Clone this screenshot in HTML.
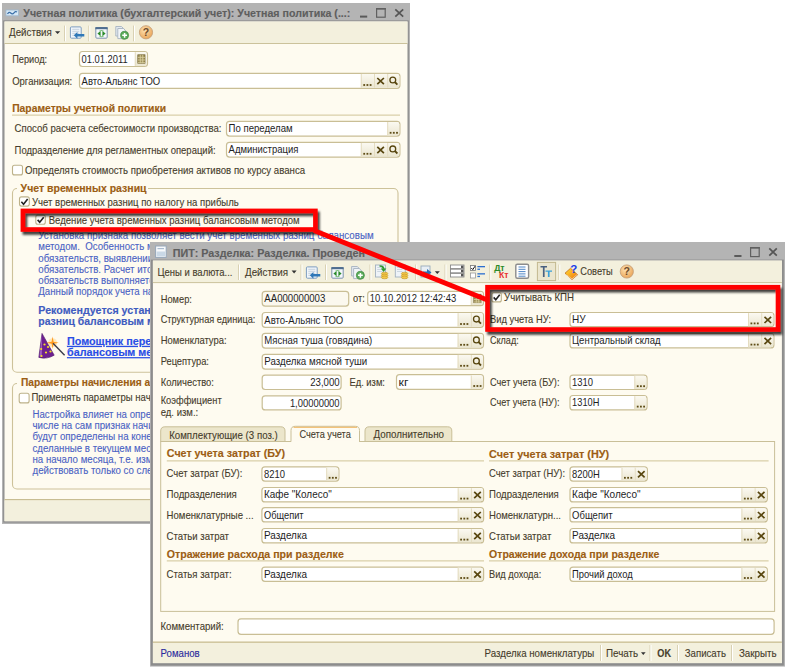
<!DOCTYPE html>
<html><head><meta charset="utf-8"><title>1C</title>
<style>html,body{margin:0;padding:0;background:#fff;width:788px;height:669px;overflow:hidden;font-family:"Liberation Sans",sans-serif}svg{display:block}</style>
</head><body>
<svg width="788" height="669" viewBox="0 0 788 669" font-family="&quot;Liberation Sans&quot;, sans-serif"><defs>
<linearGradient id="gBtn" x1="0" y1="0" x2="0" y2="1"><stop offset="0" stop-color="#fbf9f1"/><stop offset="1" stop-color="#ebe6d0"/></linearGradient>
<linearGradient id="gBook" x1="0" y1="0" x2="1" y2="1"><stop offset="0" stop-color="#ffe030"/><stop offset="1" stop-color="#f07010"/></linearGradient>
<radialGradient id="gOr" cx="0.4" cy="0.35" r="0.7"><stop offset="0" stop-color="#fde0b0"/><stop offset="1" stop-color="#e9a355"/></radialGradient>
<filter id="sh" x="-10%" y="-30%" width="120%" height="160%"><feGaussianBlur in="SourceAlpha" stdDeviation="1.2"/><feOffset dx="2" dy="2.5" result="o"/><feFlood flood-color="#000" flood-opacity="0.75"/><feComposite in2="o" operator="in"/><feMerge><feMergeNode/><feMergeNode in="SourceGraphic"/></feMerge></filter>
</defs><rect x="0" y="0" width="788" height="669" fill="#ffffff"/>
<rect x="2" y="3" width="408.00" height="521.00" fill="#b4b4b4"/>
<rect x="3.2" y="20.4" width="405.60" height="502.20" fill="#8c8c8c"/>
<rect x="4.5" y="21.5" width="403.00" height="499.70" fill="#fefbf0"/>
<rect x="6" y="10" width="12.40" height="5.80" fill="#d6e8f6" stroke="#9fb8cf" stroke-width="0.8"/>
<path d="M7.5,14 Q9,11.2 10.7,13 T14,12.8 T17,12" fill="none" stroke="#3a6fa8" stroke-width="1.2"/>
<text x="23.3" y="16.9" font-size="11" font-weight="bold" fill="#5e5e5e" textLength="327.0" lengthAdjust="spacingAndGlyphs" stroke="#5e5e5e" stroke-width="0.15">Учетная политика (бухгалтерский учет): Учетная политика (...:</text>
<rect x="360" y="15.6" width="7.20" height="2.00" fill="#5a5a5a"/>
<rect x="376.6" y="8.6" width="8.60" height="8.60" fill="none" stroke="#606060" stroke-width="1.2"/>
<rect x="376" y="8" width="9.80" height="1.60" fill="#606060"/>
<path d="M395.3,9.3L403.2,16.6M403.2,9.3L395.3,16.6" stroke="#555" stroke-width="1.7"/>
<rect x="4.5" y="21.5" width="403.00" height="21.70" fill="#f3f0dd"/>
<line x1="4.5" y1="43.5" x2="407.5" y2="43.5" stroke="#cbc29b" stroke-width="1"/>
<text x="9.1" y="36.4" font-size="11" fill="#463d2c" textLength="42.7" lengthAdjust="spacingAndGlyphs" stroke="#463d2c" stroke-width="0.12">Действия</text>
<path d="M55,31.2H60.2L57.6,34Z" fill="#333"/>
<line x1="64.5" y1="25.6" x2="64.5" y2="41.3" stroke="#d9d1b3" stroke-width="1"/>
<line x1="65.5" y1="25.6" x2="65.5" y2="41.3" stroke="#ffffff" stroke-width="1"/>
<line x1="88.8" y1="25.6" x2="88.8" y2="41.3" stroke="#d9d1b3" stroke-width="1"/>
<line x1="89.8" y1="25.6" x2="89.8" y2="41.3" stroke="#ffffff" stroke-width="1"/>
<line x1="133.5" y1="25.6" x2="133.5" y2="41.3" stroke="#d9d1b3" stroke-width="1"/>
<line x1="134.5" y1="25.6" x2="134.5" y2="41.3" stroke="#ffffff" stroke-width="1"/>
<g transform="translate(0,0)">
<rect x="70.4" y="26.9" width="10.8" height="11.3" rx="1" fill="#f1f6fb" stroke="#7d9dc0" stroke-width="1"/>
<line x1="72.3" y1="29.3" x2="79.3" y2="29.3" stroke="#b9c6d6" stroke-width="0.8"/>
<line x1="72.3" y1="31.3" x2="79.3" y2="31.3" stroke="#b9c6d6" stroke-width="0.8"/>
<line x1="72.3" y1="33.3" x2="79.3" y2="33.3" stroke="#b9c6d6" stroke-width="0.8"/>
<line x1="72.3" y1="35.3" x2="79.3" y2="35.3" stroke="#b9c6d6" stroke-width="0.8"/>
<path d="M73.8,35.3L77.4,31.9V34.1H84.3V36.5H77.4V38.7Z" fill="#2f78b8"/>
</g>
<g transform="translate(0,0)">
<rect x="95.8" y="27.6" width="11.4" height="10.6" rx="1" fill="#f3f7fb" stroke="#7d93ad" stroke-width="1"/>
<rect x="95.3" y="27.1" width="12.4" height="2.1" fill="#4e6d8f"/>
<path d="M97.4,33.6L100.6,30.9V36.3Z M105.6,33.6L102.4,30.9V36.3Z" fill="#2a8a2a"/>
<path d="M99.5,31.2Q101.5,29.8 103.5,31.2 M99.5,36Q101.5,37.4 103.5,36" fill="none" stroke="#7cc07c" stroke-width="1.1"/>
</g>
<g transform="translate(0,0)">
<path d="M115.8,26.5H121.5L123.8,28.8V36H115.8Z" fill="#e3e9f0" stroke="#a7b3c1" stroke-width="0.9"/>
<path d="M117.8,28.5H123.5L126,31V38.6H117.8Z" fill="#f2f5f8" stroke="#a7b3c1" stroke-width="0.9"/>
<circle cx="124.6" cy="35.3" r="4" fill="#5aaa5a" stroke="#3d8a3d" stroke-width="0.7"/>
<path d="M122.2,35.3H127M124.6,32.9V37.7" stroke="#ffffff" stroke-width="1.5"/>
</g>
<circle cx="146.0" cy="32.3" r="6.6" fill="url(#gOr)" stroke="#c6a27c" stroke-width="0.9"/>
<text x="146.0" y="36.0" font-size="10.5" font-weight="bold" fill="#6d4a2a" text-anchor="middle">?</text>
<text x="12.2" y="62.7" font-size="11" fill="#463d2c" textLength="34.9" lengthAdjust="spacingAndGlyphs" stroke="#463d2c" stroke-width="0.12">Период:</text>
<rect x="79.5" y="51.5" width="68.00" height="15.00" fill="#ffffff" stroke="#c9be95" stroke-width="1.2" rx="3"/>
<path d="M134.8,52.1H144.5Q146.9,52.1 146.9,54.5V63.5Q146.9,65.9 144.5,65.9H134.8Z" fill="url(#gBtn)"/>
<line x1="135.3" y1="52.2" x2="135.3" y2="65.8" stroke="#e4dcc0" stroke-width="1"/>
<rect x="137.8" y="54.8" width="7.20" height="8.40" fill="#a1925a" stroke="#6f6030" stroke-width="0.7"/>
<line x1="137.8" y1="57.4" x2="145.0" y2="57.4" stroke="#d9cf9f" stroke-width="0.8"/>
<line x1="137.8" y1="60.0" x2="145.0" y2="60.0" stroke="#d9cf9f" stroke-width="0.8"/>
<line x1="137.8" y1="62.6" x2="145.0" y2="62.6" stroke="#d9cf9f" stroke-width="0.8"/>
<line x1="140.3" y1="54.8" x2="140.3" y2="63.2" stroke="#d9cf9f" stroke-width="0.8"/>
<line x1="142.70000000000002" y1="54.8" x2="142.70000000000002" y2="63.2" stroke="#d9cf9f" stroke-width="0.8"/>
<text x="81.6" y="62.7" font-size="11" fill="#1e1e1e" textLength="46.0" lengthAdjust="spacingAndGlyphs">01.01.2011</text>
<text x="12.2" y="84.6" font-size="11" fill="#463d2c" textLength="60.0" lengthAdjust="spacingAndGlyphs" stroke="#463d2c" stroke-width="0.12">Организация:</text>
<rect x="79.5" y="73.3" width="320.40" height="15.00" fill="#ffffff" stroke="#c9be95" stroke-width="1.2" rx="3"/>
<rect x="360.79999999999995" y="73.89999999999999" width="13.20" height="13.80" fill="url(#gBtn)"/>
<line x1="361.29999999999995" y1="74.0" x2="361.29999999999995" y2="87.6" stroke="#e4dcc0" stroke-width="1"/>
<rect x="363.3" y="84.10000000000001" width="1.80" height="1.80" fill="#5e4c16"/>
<rect x="366.5" y="84.10000000000001" width="1.80" height="1.80" fill="#5e4c16"/>
<rect x="369.7" y="84.10000000000001" width="1.80" height="1.80" fill="#5e4c16"/>
<rect x="373.99999999999994" y="73.89999999999999" width="13.20" height="13.80" fill="url(#gBtn)"/>
<line x1="374.49999999999994" y1="74.0" x2="374.49999999999994" y2="87.6" stroke="#e4dcc0" stroke-width="1"/>
<path d="M377.2999999999999,78.0L383.8999999999999,84.19999999999999M383.8999999999999,78.0L377.2999999999999,84.19999999999999" stroke="#58460f" stroke-width="1.7"/>
<path d="M387.19999999999993,73.89999999999999H396.8999999999999Q399.2999999999999,73.89999999999999 399.2999999999999,76.3V85.3Q399.2999999999999,87.7 396.8999999999999,87.7H387.19999999999993Z" fill="url(#gBtn)"/>
<line x1="387.69999999999993" y1="74.0" x2="387.69999999999993" y2="87.6" stroke="#e4dcc0" stroke-width="1"/>
<circle cx="392.79999999999995" cy="80.0" r="2.9" fill="none" stroke="#58460f" stroke-width="1.3"/>
<path d="M394.79999999999995,82.0L397.4,84.6" stroke="#58460f" stroke-width="1.8"/>
<text x="81.6" y="84.5" font-size="11" fill="#1e1e1e" textLength="78.6" lengthAdjust="spacingAndGlyphs">Авто-Альянс ТОО</text>
<text x="12.2" y="112.2" font-size="11" font-weight="bold" fill="#9c5e14" textLength="153.8" lengthAdjust="spacingAndGlyphs" stroke="#9c5e14" stroke-width="0.15">Параметры учетной политики</text>
<line x1="12" y1="115.2" x2="400" y2="115.2" stroke="#d9cfa9" stroke-width="1.2"/>
<text x="14.6" y="131.6" font-size="11" fill="#463d2c" textLength="206.8" lengthAdjust="spacingAndGlyphs" stroke="#463d2c" stroke-width="0.12">Способ расчета себестоимости производства:</text>
<rect x="226.5" y="121.3" width="173.40" height="14.80" fill="#ffffff" stroke="#c9be95" stroke-width="1.2" rx="3"/>
<path d="M387.2,121.89999999999999H396.9Q399.29999999999995,121.89999999999999 399.29999999999995,124.3V133.1Q399.29999999999995,135.5 396.9,135.5H387.2Z" fill="url(#gBtn)"/>
<line x1="387.7" y1="122.0" x2="387.7" y2="135.4" stroke="#e4dcc0" stroke-width="1"/>
<rect x="389.7" y="131.9" width="1.80" height="1.80" fill="#5e4c16"/>
<rect x="392.9" y="131.9" width="1.80" height="1.80" fill="#5e4c16"/>
<rect x="396.09999999999997" y="131.9" width="1.80" height="1.80" fill="#5e4c16"/>
<text x="228.6" y="132.4" font-size="11" fill="#1e1e1e" textLength="64.0" lengthAdjust="spacingAndGlyphs">По переделам</text>
<text x="14.6" y="154.0" font-size="11" fill="#463d2c" textLength="201.0" lengthAdjust="spacingAndGlyphs" stroke="#463d2c" stroke-width="0.12">Подразделение для регламентных операций:</text>
<rect x="226.5" y="142.3" width="173.40" height="14.80" fill="#ffffff" stroke="#c9be95" stroke-width="1.2" rx="3"/>
<rect x="360.79999999999995" y="142.9" width="13.20" height="13.60" fill="url(#gBtn)"/>
<line x1="361.29999999999995" y1="143.0" x2="361.29999999999995" y2="156.4" stroke="#e4dcc0" stroke-width="1"/>
<rect x="363.3" y="152.9" width="1.80" height="1.80" fill="#5e4c16"/>
<rect x="366.5" y="152.9" width="1.80" height="1.80" fill="#5e4c16"/>
<rect x="369.7" y="152.9" width="1.80" height="1.80" fill="#5e4c16"/>
<rect x="373.99999999999994" y="142.9" width="13.20" height="13.60" fill="url(#gBtn)"/>
<line x1="374.49999999999994" y1="143.0" x2="374.49999999999994" y2="156.4" stroke="#e4dcc0" stroke-width="1"/>
<path d="M377.2999999999999,146.9L383.8999999999999,153.1M383.8999999999999,146.9L377.2999999999999,153.1" stroke="#58460f" stroke-width="1.7"/>
<path d="M387.19999999999993,142.9H396.8999999999999Q399.2999999999999,142.9 399.2999999999999,145.3V154.1Q399.2999999999999,156.5 396.8999999999999,156.5H387.19999999999993Z" fill="url(#gBtn)"/>
<line x1="387.69999999999993" y1="143.0" x2="387.69999999999993" y2="156.4" stroke="#e4dcc0" stroke-width="1"/>
<circle cx="392.79999999999995" cy="148.89999999999998" r="2.9" fill="none" stroke="#58460f" stroke-width="1.3"/>
<path d="M394.79999999999995,150.89999999999998L397.4,153.49999999999997" stroke="#58460f" stroke-width="1.8"/>
<text x="228.6" y="153.4" font-size="11" fill="#1e1e1e" textLength="69.8" lengthAdjust="spacingAndGlyphs">Администрация</text>
<rect x="12.5" y="165.3" width="10.00" height="9.60" fill="#ffffff" stroke="#bdb28a" stroke-width="1.1" rx="2"/>
<text x="25.1" y="173.6" font-size="11" fill="#463d2c" textLength="280.0" lengthAdjust="spacingAndGlyphs" stroke="#463d2c" stroke-width="0.12">Определять стоимость приобретения активов по курсу аванса</text>
<rect x="12.5" y="188.5" width="385.50" height="183.80" fill="none" stroke="#cdc29a" stroke-width="1.1" rx="4.5"/>
<rect x="17" y="182" width="131.00" height="12.00" fill="#fefbf0"/>
<text x="20.6" y="191.6" font-size="11" font-weight="bold" fill="#9c5e14" textLength="126.0" lengthAdjust="spacingAndGlyphs" stroke="#9c5e14" stroke-width="0.15">Учет временных разниц</text>
<rect x="19.5" y="196.9" width="9.80" height="9.20" fill="#ffffff" stroke="#bdb28a" stroke-width="1.1" rx="2"/>
<path d="M21.376,201.8L23.536,204.17600000000002L27.64,199.1" fill="none" stroke="#222" stroke-width="1.6"/>
<text x="32.0" y="205.5" font-size="11" fill="#463d2c" textLength="206.8" lengthAdjust="spacingAndGlyphs" stroke="#463d2c" stroke-width="0.12">Учет временных разниц по налогу на прибыль</text>
<rect x="35.8" y="215.1" width="9.50" height="9.20" fill="#ffffff" stroke="#bdb28a" stroke-width="1.1" rx="2"/>
<path d="M37.61,219.85L39.709999999999994,222.16L43.699999999999996,217.225" fill="none" stroke="#222" stroke-width="1.6"/>
<text x="48.7" y="223.8" font-size="11" fill="#463d2c" textLength="251.0" lengthAdjust="spacingAndGlyphs" stroke="#463d2c" stroke-width="0.12">Ведение учета временных разниц балансовым методом</text>
<text x="38.3" y="239.1" font-size="11" fill="#4a62c4" textLength="335.3" lengthAdjust="spacingAndGlyphs" stroke="#4a62c4" stroke-width="0.12">Установка признака позволяет вести учет временных разниц балансовым</text>
<text transform="translate(38.3,250.3) scale(0.88,1)" font-size="11" fill="#4a62c4" stroke="#4a62c4" stroke-width="0.12">методом.  Особенность метода заключается в признании отложенных налоговых</text>
<text transform="translate(38.3,261.5) scale(0.88,1)" font-size="11" fill="#4a62c4" stroke="#4a62c4" stroke-width="0.12">обязательств, выявлении временных разниц и отложенных налоговых активов</text>
<text transform="translate(38.3,272.7) scale(0.88,1)" font-size="11" fill="#4a62c4" stroke="#4a62c4" stroke-width="0.12">обязательств. Расчет итоговых сумм отложенного налога и отложенных</text>
<text transform="translate(38.3,283.9) scale(0.88,1)" font-size="11" fill="#4a62c4" stroke="#4a62c4" stroke-width="0.12">обязательств выполняется по данным бухгалтерского и налогового учета.</text>
<text transform="translate(38.3,295.1) scale(0.88,1)" font-size="11" fill="#4a62c4" stroke="#4a62c4" stroke-width="0.12">Данный порядок учета налога на прибыль соответствует требованиям МСФО.</text>
<text transform="translate(38.3,314.0) scale(0.97,1)" font-size="11" font-weight="bold" fill="#3f5cc0" stroke="#3f5cc0" stroke-width="0.15">Рекомендуется установить признак ведения учета временных</text>
<text transform="translate(38.3,325.1) scale(0.95,1)" font-size="11" font-weight="bold" fill="#3f5cc0" stroke="#3f5cc0" stroke-width="0.15">разниц балансовым методом.</text>
<path d="M42,333.4 L54.2,355.2 Q47,359.6 38.8,357.4 Z" fill="#6e1f90" stroke="#4a1066" stroke-width="0.6"/>
<path d="M42,334.5 L39.6,356.5 L41.8,357 Z" fill="#b070d0" opacity="0.8"/>
<circle cx="41.2" cy="349" r="1.1" fill="#f4e020"/>
<circle cx="44.5" cy="344.5" r="1.1" fill="#f4e020"/>
<circle cx="46" cy="352.5" r="1.1" fill="#f4e020"/>
<circle cx="50.5" cy="351.5" r="1.1" fill="#f4e020"/>
<circle cx="41.5" cy="356" r="1.1" fill="#f4e020"/>
<circle cx="48" cy="347" r="1.1" fill="#f4e020"/>
<circle cx="52.6" cy="342.8" r="4.5" fill="#ffd890" opacity="0.55"/>
<path d="M52.6,336.5 L53.6,341.8 L58.8,342.8 L53.6,343.8 L52.6,349 L51.6,343.8 L46.4,342.8 L51.6,341.8Z" fill="#ff9a20"/>
<path d="M53,343.2 L64.6,355.2" stroke="#3a3a4a" stroke-width="1.4"/>
<text transform="translate(67.0,344.9) scale(0.98,1)" font-size="11" font-weight="bold" fill="#2a4ee6" text-decoration="underline" stroke="#2a4ee6" stroke-width="0.15">Помощник перехода на учет временных разниц</text>
<text transform="translate(67.0,356.1) scale(0.98,1)" font-size="11" font-weight="bold" fill="#2a4ee6" text-decoration="underline" stroke="#2a4ee6" stroke-width="0.15">балансовым методом</text>
<rect x="12.5" y="383.5" width="385.50" height="105.50" fill="none" stroke="#cdc29a" stroke-width="1.1" rx="4.5"/>
<rect x="17" y="377" width="383.00" height="13.00" fill="#fefbf0"/>
<text transform="translate(20.9,386.4) scale(0.93,1)" font-size="11" font-weight="bold" fill="#9c5e14" stroke="#9c5e14" stroke-width="0.15">Параметры начисления амортизации</text>
<rect x="19.2" y="393.3" width="9.90" height="9.60" fill="#ffffff" stroke="#bdb28a" stroke-width="1.1" rx="2"/>
<text transform="translate(31.5,401.4) scale(0.87,1)" font-size="11" fill="#463d2c" stroke="#463d2c" stroke-width="0.12">Применять параметры начисления амортизации</text>
<text transform="translate(32.5,418.0) scale(0.88,1)" font-size="11" fill="#4a62c4" stroke="#4a62c4" stroke-width="0.12">Настройка влияет на определение параметров начисления амортизации, в том</text>
<text transform="translate(32.5,429.2) scale(0.88,1)" font-size="11" fill="#4a62c4" stroke="#4a62c4" stroke-width="0.12">числе на сам признак начисления. Если флаг установлен, то параметры</text>
<text transform="translate(32.5,440.4) scale(0.88,1)" font-size="11" fill="#4a62c4" stroke="#4a62c4" stroke-width="0.12">будут определены на конец месяца с учетом изменений, которые были</text>
<text transform="translate(32.5,451.6) scale(0.88,1)" font-size="11" fill="#4a62c4" stroke="#4a62c4" stroke-width="0.12">сделанные в текущем месяце. Если флаг снят, параметры будут определены</text>
<text transform="translate(32.5,462.8) scale(0.88,1)" font-size="11" fill="#4a62c4" stroke="#4a62c4" stroke-width="0.12">на начало месяца, т.е. изменения, сделанные в текущем месяце, будут</text>
<text transform="translate(32.5,474.0) scale(0.88,1)" font-size="11" fill="#4a62c4" stroke="#4a62c4" stroke-width="0.12">действовать только со следующего месяца.</text>
<line x1="4.5" y1="499.8" x2="407.5" y2="499.8" stroke="#c8bd92" stroke-width="1.4"/>
<rect x="4.5" y="500.4" width="403.00" height="20.80" fill="#f3f0dd"/>
<rect x="150" y="242" width="635.00" height="424.60" fill="#b4b4b4"/>
<rect x="150.9" y="259.6" width="632.90" height="406.00" fill="#8c8c8c"/>
<rect x="152.9" y="260.6" width="629.00" height="402.50" fill="#fefbf0"/>
<rect x="155.6" y="246" width="10.60" height="11.40" fill="#f7f9fb" stroke="#95a6b8" stroke-width="1"/>
<rect x="156.6" y="251.5" width="8.60" height="4.90" fill="#c9d8e6"/>
<rect x="157.5" y="248" width="6.50" height="1.20" fill="#aabbd0"/>
<text x="172.8" y="257.0" font-size="11" font-weight="bold" fill="#5e5e5e" textLength="192.2" lengthAdjust="spacingAndGlyphs" stroke="#5e5e5e" stroke-width="0.15">ПИТ: Разделка: Разделка. Проведен</text>
<rect x="734.3" y="255" width="7.20" height="2.00" fill="#5a5a5a"/>
<rect x="750.6" y="247.6" width="8.60" height="9.00" fill="none" stroke="#606060" stroke-width="1.2"/>
<rect x="750" y="247" width="9.80" height="1.60" fill="#606060"/>
<path d="M769.3,248.4L776.8,255.7M776.8,248.4L769.3,255.7" stroke="#555" stroke-width="1.7"/>
<rect x="152.9" y="260.6" width="629.00" height="21.60" fill="#f3f0dd"/>
<line x1="152.9" y1="282.6" x2="781.9" y2="282.6" stroke="#cbc29b" stroke-width="1"/>
<text x="157.5" y="275.7" font-size="11" fill="#463d2c" textLength="75.0" lengthAdjust="spacingAndGlyphs" stroke="#463d2c" stroke-width="0.12">Цены и валюта...</text>
<line x1="238.5" y1="264.5" x2="238.5" y2="280" stroke="#d9d1b3" stroke-width="1"/>
<line x1="239.5" y1="264.5" x2="239.5" y2="280" stroke="#ffffff" stroke-width="1"/>
<text x="245.0" y="275.7" font-size="11" fill="#463d2c" textLength="43.0" lengthAdjust="spacingAndGlyphs" stroke="#463d2c" stroke-width="0.12">Действия</text>
<path d="M291.6,270.6H296.6L294.1,273.4Z" fill="#333"/>
<line x1="301.0" y1="264.5" x2="301.0" y2="280" stroke="#d9d1b3" stroke-width="1"/>
<line x1="302.0" y1="264.5" x2="302.0" y2="280" stroke="#ffffff" stroke-width="1"/>
<g transform="translate(236,240)">
<rect x="70.4" y="26.9" width="10.8" height="11.3" rx="1" fill="#f1f6fb" stroke="#7d9dc0" stroke-width="1"/>
<line x1="72.3" y1="29.3" x2="79.3" y2="29.3" stroke="#b9c6d6" stroke-width="0.8"/>
<line x1="72.3" y1="31.3" x2="79.3" y2="31.3" stroke="#b9c6d6" stroke-width="0.8"/>
<line x1="72.3" y1="33.3" x2="79.3" y2="33.3" stroke="#b9c6d6" stroke-width="0.8"/>
<line x1="72.3" y1="35.3" x2="79.3" y2="35.3" stroke="#b9c6d6" stroke-width="0.8"/>
<path d="M73.8,35.3L77.4,31.9V34.1H84.3V36.5H77.4V38.7Z" fill="#2f78b8"/>
</g>
<line x1="325.5" y1="264.5" x2="325.5" y2="280" stroke="#d9d1b3" stroke-width="1"/>
<line x1="326.5" y1="264.5" x2="326.5" y2="280" stroke="#ffffff" stroke-width="1"/>
<g transform="translate(236,240)">
<rect x="95.8" y="27.6" width="11.4" height="10.6" rx="1" fill="#f3f7fb" stroke="#7d93ad" stroke-width="1"/>
<rect x="95.3" y="27.1" width="12.4" height="2.1" fill="#4e6d8f"/>
<path d="M97.4,33.6L100.6,30.9V36.3Z M105.6,33.6L102.4,30.9V36.3Z" fill="#2a8a2a"/>
<path d="M99.5,31.2Q101.5,29.8 103.5,31.2 M99.5,36Q101.5,37.4 103.5,36" fill="none" stroke="#7cc07c" stroke-width="1.1"/>
</g>
<g transform="translate(235.8,240)">
<path d="M115.8,26.5H121.5L123.8,28.8V36H115.8Z" fill="#e3e9f0" stroke="#a7b3c1" stroke-width="0.9"/>
<path d="M117.8,28.5H123.5L126,31V38.6H117.8Z" fill="#f2f5f8" stroke="#a7b3c1" stroke-width="0.9"/>
<circle cx="124.6" cy="35.3" r="4" fill="#5aaa5a" stroke="#3d8a3d" stroke-width="0.7"/>
<path d="M122.2,35.3H127M124.6,32.9V37.7" stroke="#ffffff" stroke-width="1.5"/>
</g>
<line x1="370.0" y1="264.5" x2="370.0" y2="280" stroke="#d9d1b3" stroke-width="1"/>
<line x1="371.0" y1="264.5" x2="371.0" y2="280" stroke="#ffffff" stroke-width="1"/>
<rect x="375.5" y="265" width="10.00" height="12.00" fill="#eef3f8" stroke="#a3b1c0" stroke-width="0.9"/>
<line x1="377.2" y1="267.5" x2="382.5" y2="267.5" stroke="#bcc8d6" stroke-width="0.7"/>
<line x1="377.2" y1="269.5" x2="382.5" y2="269.5" stroke="#bcc8d6" stroke-width="0.7"/>
<line x1="377.2" y1="271.5" x2="382.5" y2="271.5" stroke="#bcc8d6" stroke-width="0.7"/>
<path d="M379.5,265.2Q384,265 384.6,268.6H386.4L383.6,272L380.8,268.6H382.6Q382.2,266.6 379.5,266.8Z" fill="#2f9a2f"/>
<ellipse cx="384.6" cy="273.6" rx="3.3" ry="1.4" fill="#f4c84a" stroke="#b88a18" stroke-width="0.5"/>
<ellipse cx="384.6" cy="275.5" rx="3.3" ry="1.4" fill="#f4c84a" stroke="#b88a18" stroke-width="0.5"/>
<ellipse cx="384.6" cy="277.40000000000003" rx="3.3" ry="1.4" fill="#f4c84a" stroke="#b88a18" stroke-width="0.5"/>
<rect x="395.3" y="265" width="10.00" height="12.00" fill="#eef3f8" stroke="#a3b1c0" stroke-width="0.9"/>
<line x1="397" y1="267.5" x2="402.3" y2="267.5" stroke="#bcc8d6" stroke-width="0.7"/>
<line x1="397" y1="269.5" x2="402.3" y2="269.5" stroke="#bcc8d6" stroke-width="0.7"/>
<line x1="397" y1="271.5" x2="402.3" y2="271.5" stroke="#bcc8d6" stroke-width="0.7"/>
<ellipse cx="404.6" cy="273.6" rx="3.3" ry="1.4" fill="#f4c84a" stroke="#b88a18" stroke-width="0.5"/>
<ellipse cx="404.6" cy="275.5" rx="3.3" ry="1.4" fill="#f4c84a" stroke="#b88a18" stroke-width="0.5"/>
<ellipse cx="404.6" cy="277.40000000000003" rx="3.3" ry="1.4" fill="#f4c84a" stroke="#b88a18" stroke-width="0.5"/>
<line x1="415.7" y1="264.5" x2="415.7" y2="280" stroke="#d9d1b3" stroke-width="1"/>
<line x1="416.7" y1="264.5" x2="416.7" y2="280" stroke="#ffffff" stroke-width="1"/>
<rect x="421" y="266" width="9.00" height="11.00" fill="#e8eef5" stroke="#9aaabb" stroke-width="0.9"/>
<path d="M423,271.5H427V269L431.5,272.5L427,276V273.5H423Z" fill="#2a6fb5"/>
<path d="M434.8,271.2H439.8L437.3,274Z" fill="#333"/>
<line x1="445.0" y1="264.5" x2="445.0" y2="280" stroke="#d9d1b3" stroke-width="1"/>
<line x1="446.0" y1="264.5" x2="446.0" y2="280" stroke="#ffffff" stroke-width="1"/>
<rect x="450.5" y="265.0" width="13.50" height="3.60" fill="#ffffff" stroke="#8a8a8a" stroke-width="0.9"/>
<rect x="461" y="265.6" width="2.50" height="2.40" fill="#555"/>
<rect x="450.5" y="269.2" width="13.50" height="3.60" fill="#ffffff" stroke="#8a8a8a" stroke-width="0.9"/>
<rect x="461" y="269.8" width="2.50" height="2.40" fill="#555"/>
<rect x="450.5" y="273.4" width="13.50" height="3.60" fill="#ffffff" stroke="#8a8a8a" stroke-width="0.9"/>
<rect x="461" y="274.0" width="2.50" height="2.40" fill="#555"/>
<rect x="470.5" y="265.5" width="5.00" height="5.00" fill="#fff" stroke="#777" stroke-width="0.8"/>
<path d="M471.3,268L472.8,269.6L475,266.2" fill="none" stroke="#111" stroke-width="1"/>
<rect x="470.5" y="273" width="5.00" height="5.00" fill="#fff" stroke="#999" stroke-width="0.8"/>
<rect x="477.4" y="266" width="7.60" height="1.30" fill="#2b6fd0"/>
<rect x="477.4" y="268.6" width="2.60" height="1.30" fill="#2b6fd0"/>
<rect x="477.4" y="273.2" width="7.60" height="1.30" fill="#2b6fd0"/>
<rect x="477.4" y="275.8" width="2.60" height="1.30" fill="#2b6fd0"/>
<line x1="489.8" y1="264.5" x2="489.8" y2="280" stroke="#d9d1b3" stroke-width="1"/>
<line x1="490.8" y1="264.5" x2="490.8" y2="280" stroke="#ffffff" stroke-width="1"/>
<text x="494.2" y="271.3" font-size="8.5" font-weight="bold" fill="#2a8a2a" textLength="10.4" lengthAdjust="spacingAndGlyphs">Дт</text>
<text x="499" y="278.4" font-size="8.5" font-weight="bold" fill="#e83030" textLength="9.5" lengthAdjust="spacingAndGlyphs">Кт</text>
<rect x="515.8" y="264.3" width="12.80" height="13.90" fill="#ffffff" stroke="#8c8c8c" stroke-width="1.4" rx="1.5"/>
<line x1="518.5" y1="267.0" x2="525.5" y2="267.0" stroke="#3a78c0" stroke-width="0.9"/>
<line x1="518.5" y1="269.3" x2="525.5" y2="269.3" stroke="#3a78c0" stroke-width="0.9"/>
<line x1="518.5" y1="271.6" x2="525.5" y2="271.6" stroke="#3a78c0" stroke-width="0.9"/>
<line x1="518.5" y1="273.9" x2="525.5" y2="273.9" stroke="#3a78c0" stroke-width="0.9"/>
<line x1="518.5" y1="276.2" x2="525.5" y2="276.2" stroke="#3a78c0" stroke-width="0.9"/>
<rect x="537.4" y="262.4" width="18.20" height="18.20" fill="#ebe6cf" stroke="#c3b990" stroke-width="1"/>
<path d="M540.5,266H547V267.6H544.6V277H542.9V267.6H540.5Z" fill="#4a6080"/>
<path d="M545.5,270.5H552V271.8H549.6V277H547.9V271.8H545.5Z" fill="#3aa0d8"/>
<line x1="558.8" y1="264.5" x2="558.8" y2="280" stroke="#d9d1b3" stroke-width="1"/>
<line x1="559.8" y1="264.5" x2="559.8" y2="280" stroke="#ffffff" stroke-width="1"/>
<path d="M565,273.2L570.6,268.2L577.6,274.8L572,279.6Z" fill="url(#gBook)" stroke="#b85c10" stroke-width="0.7"/>
<path d="M566.4,274.6L572,279L577,274.6" fill="none" stroke="#f8d8a0" stroke-width="0.8"/>
<text x="570.2" y="272.6" font-size="11.5" font-weight="bold" fill="#1a3ce8">?</text>
<text x="580.2" y="275.2" font-size="11" fill="#463d2c" textLength="32.5" lengthAdjust="spacingAndGlyphs" stroke="#463d2c" stroke-width="0.12">Советы</text>
<circle cx="626.8" cy="271.5" r="6.6" fill="url(#gOr)" stroke="#c6a27c" stroke-width="0.9"/>
<text x="626.8" y="275.2" font-size="10.5" font-weight="bold" fill="#6d4a2a" text-anchor="middle">?</text>
<text x="160.7" y="302.7" font-size="11" fill="#463d2c" textLength="31.2" lengthAdjust="spacingAndGlyphs" stroke="#463d2c" stroke-width="0.12">Номер:</text>
<rect x="262.2" y="291.4" width="86.50" height="14.70" fill="#fbf8ee" stroke="#c9be95" stroke-width="1.2" rx="3"/>
<text x="264.3" y="302.4" font-size="11" fill="#1e1e1e" textLength="61.0" lengthAdjust="spacingAndGlyphs">АА000000003</text>
<text x="353.0" y="301.9" font-size="11" fill="#463d2c" textLength="11.7" lengthAdjust="spacingAndGlyphs" stroke="#463d2c" stroke-width="0.12">от:</text>
<rect x="367.7" y="291.3" width="115.80" height="14.40" fill="#ffffff" stroke="#c9be95" stroke-width="1.2" rx="3"/>
<path d="M470.8,291.90000000000003H480.5Q482.9,291.90000000000003 482.9,294.3V302.7Q482.9,305.09999999999997 480.5,305.09999999999997H470.8Z" fill="url(#gBtn)"/>
<line x1="471.3" y1="292.0" x2="471.3" y2="305.0" stroke="#e4dcc0" stroke-width="1"/>
<rect x="473.79999999999995" y="294.3" width="7.20" height="8.40" fill="#a1925a" stroke="#6f6030" stroke-width="0.7"/>
<line x1="473.79999999999995" y1="296.9" x2="481.0" y2="296.9" stroke="#d9cf9f" stroke-width="0.8"/>
<line x1="473.79999999999995" y1="299.5" x2="481.0" y2="299.5" stroke="#d9cf9f" stroke-width="0.8"/>
<line x1="473.79999999999995" y1="302.09999999999997" x2="481.0" y2="302.09999999999997" stroke="#d9cf9f" stroke-width="0.8"/>
<line x1="476.29999999999995" y1="294.3" x2="476.29999999999995" y2="302.7" stroke="#d9cf9f" stroke-width="0.8"/>
<line x1="478.7" y1="294.3" x2="478.7" y2="302.7" stroke="#d9cf9f" stroke-width="0.8"/>
<text x="369.8" y="302.2" font-size="11" fill="#1e1e1e" textLength="86.4" lengthAdjust="spacingAndGlyphs">10.10.2012 12:42:43</text>
<text x="160.7" y="323.4" font-size="11" fill="#463d2c" textLength="94.6" lengthAdjust="spacingAndGlyphs" stroke="#463d2c" stroke-width="0.12">Структурная единица:</text>
<rect x="262.2" y="312.5" width="221.30" height="14.80" fill="#ffffff" stroke="#c9be95" stroke-width="1.2" rx="3"/>
<rect x="457.6" y="313.1" width="13.20" height="13.60" fill="url(#gBtn)"/>
<line x1="458.1" y1="313.2" x2="458.1" y2="326.6" stroke="#e4dcc0" stroke-width="1"/>
<rect x="460.1000000000001" y="323.09999999999997" width="1.80" height="1.80" fill="#5e4c16"/>
<rect x="463.30000000000007" y="323.09999999999997" width="1.80" height="1.80" fill="#5e4c16"/>
<rect x="466.50000000000006" y="323.09999999999997" width="1.80" height="1.80" fill="#5e4c16"/>
<path d="M470.8,313.1H480.5Q482.9,313.1 482.9,315.5V324.3Q482.9,326.7 480.5,326.7H470.8Z" fill="url(#gBtn)"/>
<line x1="471.3" y1="313.2" x2="471.3" y2="326.6" stroke="#e4dcc0" stroke-width="1"/>
<circle cx="476.4" cy="319.09999999999997" r="2.9" fill="none" stroke="#58460f" stroke-width="1.3"/>
<path d="M478.4,321.09999999999997L481.0,323.7" stroke="#58460f" stroke-width="1.8"/>
<text x="264.3" y="323.6" font-size="11" fill="#1e1e1e" textLength="79.0" lengthAdjust="spacingAndGlyphs">Авто-Альянс ТОО</text>
<text x="160.7" y="344.3" font-size="11" fill="#463d2c" textLength="65.9" lengthAdjust="spacingAndGlyphs" stroke="#463d2c" stroke-width="0.12">Номенклатура:</text>
<rect x="262.2" y="333.3" width="221.30" height="14.80" fill="#ffffff" stroke="#c9be95" stroke-width="1.2" rx="3"/>
<rect x="457.6" y="333.90000000000003" width="13.20" height="13.60" fill="url(#gBtn)"/>
<line x1="458.1" y1="334.0" x2="458.1" y2="347.40000000000003" stroke="#e4dcc0" stroke-width="1"/>
<rect x="460.1000000000001" y="343.9" width="1.80" height="1.80" fill="#5e4c16"/>
<rect x="463.30000000000007" y="343.9" width="1.80" height="1.80" fill="#5e4c16"/>
<rect x="466.50000000000006" y="343.9" width="1.80" height="1.80" fill="#5e4c16"/>
<path d="M470.8,333.90000000000003H480.5Q482.9,333.90000000000003 482.9,336.3V345.1Q482.9,347.5 480.5,347.5H470.8Z" fill="url(#gBtn)"/>
<line x1="471.3" y1="334.0" x2="471.3" y2="347.40000000000003" stroke="#e4dcc0" stroke-width="1"/>
<circle cx="476.4" cy="339.90000000000003" r="2.9" fill="none" stroke="#58460f" stroke-width="1.3"/>
<path d="M478.4,341.90000000000003L481.0,344.50000000000006" stroke="#58460f" stroke-width="1.8"/>
<text x="264.3" y="344.4" font-size="11" fill="#1e1e1e" textLength="108.0" lengthAdjust="spacingAndGlyphs">Мясная туша (говядина)</text>
<text x="160.7" y="365.4" font-size="11" fill="#463d2c" textLength="48.2" lengthAdjust="spacingAndGlyphs" stroke="#463d2c" stroke-width="0.12">Рецептура:</text>
<rect x="262.2" y="354.3" width="221.30" height="14.80" fill="#ffffff" stroke="#c9be95" stroke-width="1.2" rx="3"/>
<rect x="457.6" y="354.90000000000003" width="13.20" height="13.60" fill="url(#gBtn)"/>
<line x1="458.1" y1="355.0" x2="458.1" y2="368.40000000000003" stroke="#e4dcc0" stroke-width="1"/>
<rect x="460.1000000000001" y="364.9" width="1.80" height="1.80" fill="#5e4c16"/>
<rect x="463.30000000000007" y="364.9" width="1.80" height="1.80" fill="#5e4c16"/>
<rect x="466.50000000000006" y="364.9" width="1.80" height="1.80" fill="#5e4c16"/>
<path d="M470.8,354.90000000000003H480.5Q482.9,354.90000000000003 482.9,357.3V366.1Q482.9,368.5 480.5,368.5H470.8Z" fill="url(#gBtn)"/>
<line x1="471.3" y1="355.0" x2="471.3" y2="368.40000000000003" stroke="#e4dcc0" stroke-width="1"/>
<circle cx="476.4" cy="360.90000000000003" r="2.9" fill="none" stroke="#58460f" stroke-width="1.3"/>
<path d="M478.4,362.90000000000003L481.0,365.50000000000006" stroke="#58460f" stroke-width="1.8"/>
<text x="264.3" y="365.4" font-size="11" fill="#1e1e1e" textLength="103.0" lengthAdjust="spacingAndGlyphs">Разделка мясной туши</text>
<text x="160.7" y="386.2" font-size="11" fill="#463d2c" textLength="53.3" lengthAdjust="spacingAndGlyphs" stroke="#463d2c" stroke-width="0.12">Количество:</text>
<rect x="262.2" y="375.1" width="78.90" height="14.40" fill="#ffffff" stroke="#c9be95" stroke-width="1.2" rx="3"/>
<text x="310.2" y="386.0" font-size="11" fill="#1e1e1e" textLength="29.4" lengthAdjust="spacingAndGlyphs">23,000</text>
<text x="349.4" y="386.2" font-size="11" fill="#463d2c" textLength="35.6" lengthAdjust="spacingAndGlyphs" stroke="#463d2c" stroke-width="0.12">Ед. изм:</text>
<rect x="396.5" y="374.7" width="87.00" height="14.60" fill="#ffffff" stroke="#c9be95" stroke-width="1.2" rx="3"/>
<path d="M470.8,375.3H480.5Q482.9,375.3 482.9,377.7V386.3Q482.9,388.7 480.5,388.7H470.8Z" fill="url(#gBtn)"/>
<line x1="471.3" y1="375.4" x2="471.3" y2="388.6" stroke="#e4dcc0" stroke-width="1"/>
<rect x="473.3" y="385.09999999999997" width="1.80" height="1.80" fill="#5e4c16"/>
<rect x="476.5" y="385.09999999999997" width="1.80" height="1.80" fill="#5e4c16"/>
<rect x="479.7" y="385.09999999999997" width="1.80" height="1.80" fill="#5e4c16"/>
<text x="398.6" y="385.7" font-size="11" fill="#1e1e1e" textLength="9.8" lengthAdjust="spacingAndGlyphs">кг</text>
<text x="160.7" y="403.9" font-size="11" fill="#463d2c" textLength="61.0" lengthAdjust="spacingAndGlyphs" stroke="#463d2c" stroke-width="0.12">Коэффициент</text>
<text x="160.7" y="415.7" font-size="11" fill="#463d2c" textLength="37.5" lengthAdjust="spacingAndGlyphs" stroke="#463d2c" stroke-width="0.12">ед. изм.:</text>
<rect x="262.2" y="395.9" width="78.90" height="14.00" fill="#ffffff" stroke="#c9be95" stroke-width="1.2" rx="3"/>
<text x="289.9" y="406.6" font-size="11" fill="#1e1e1e" textLength="49.7" lengthAdjust="spacingAndGlyphs">1,00000000</text>
<rect x="491.9" y="292.7" width="9.40" height="9.20" fill="#ffffff" stroke="#bdb28a" stroke-width="1.1" rx="2"/>
<path d="M493.688,297.4L495.768,299.688L499.72,294.8" fill="none" stroke="#222" stroke-width="1.6"/>
<text x="504.0" y="300.6" font-size="11" fill="#463d2c" textLength="70.0" lengthAdjust="spacingAndGlyphs" stroke="#463d2c" stroke-width="0.12">Учитывать КПН</text>
<text x="490.0" y="323.4" font-size="11" fill="#463d2c" textLength="61.0" lengthAdjust="spacingAndGlyphs" stroke="#463d2c" stroke-width="0.12">Вид учета НУ:</text>
<rect x="570.0" y="312.5" width="203.90" height="14.20" fill="#ffffff" stroke="#c9be95" stroke-width="1.2" rx="3"/>
<rect x="748.0" y="313.1" width="13.20" height="13.00" fill="url(#gBtn)"/>
<line x1="748.5" y1="313.2" x2="748.5" y2="326.0" stroke="#e4dcc0" stroke-width="1"/>
<rect x="750.5" y="322.49999999999994" width="1.80" height="1.80" fill="#5e4c16"/>
<rect x="753.7" y="322.49999999999994" width="1.80" height="1.80" fill="#5e4c16"/>
<rect x="756.9000000000001" y="322.49999999999994" width="1.80" height="1.80" fill="#5e4c16"/>
<path d="M761.2,313.1H770.9000000000001Q773.3000000000001,313.1 773.3000000000001,315.5V323.7Q773.3000000000001,326.09999999999997 770.9000000000001,326.09999999999997H761.2Z" fill="url(#gBtn)"/>
<line x1="761.7" y1="313.2" x2="761.7" y2="326.0" stroke="#e4dcc0" stroke-width="1"/>
<path d="M764.5000000000001,316.8L771.1,323.00000000000006M771.1,316.8L764.5000000000001,323.00000000000006" stroke="#58460f" stroke-width="1.7"/>
<text x="572.1" y="323.3" font-size="11" fill="#1e1e1e" textLength="13.6" lengthAdjust="spacingAndGlyphs">НУ</text>
<text x="490.0" y="344.4" font-size="11" fill="#463d2c" textLength="28.7" lengthAdjust="spacingAndGlyphs" stroke="#463d2c" stroke-width="0.12">Склад:</text>
<rect x="570.0" y="333.5" width="203.90" height="14.40" fill="#ffffff" stroke="#c9be95" stroke-width="1.2" rx="3"/>
<rect x="748.0" y="334.1" width="13.20" height="13.20" fill="url(#gBtn)"/>
<line x1="748.5" y1="334.2" x2="748.5" y2="347.2" stroke="#e4dcc0" stroke-width="1"/>
<rect x="750.5" y="343.69999999999993" width="1.80" height="1.80" fill="#5e4c16"/>
<rect x="753.7" y="343.69999999999993" width="1.80" height="1.80" fill="#5e4c16"/>
<rect x="756.9000000000001" y="343.69999999999993" width="1.80" height="1.80" fill="#5e4c16"/>
<path d="M761.2,334.1H770.9000000000001Q773.3000000000001,334.1 773.3000000000001,336.5V344.9Q773.3000000000001,347.29999999999995 770.9000000000001,347.29999999999995H761.2Z" fill="url(#gBtn)"/>
<line x1="761.7" y1="334.2" x2="761.7" y2="347.2" stroke="#e4dcc0" stroke-width="1"/>
<path d="M764.5000000000001,337.9L771.1,344.1M771.1,337.9L764.5000000000001,344.1" stroke="#58460f" stroke-width="1.7"/>
<text x="572.1" y="344.4" font-size="11" fill="#1e1e1e" textLength="88.4" lengthAdjust="spacingAndGlyphs">Центральный склад</text>
<text x="490.0" y="386.2" font-size="11" fill="#463d2c" textLength="69.5" lengthAdjust="spacingAndGlyphs" stroke="#463d2c" stroke-width="0.12">Счет учета (БУ):</text>
<rect x="570.0" y="375.1" width="77.00" height="14.40" fill="#ffffff" stroke="#c9be95" stroke-width="1.2" rx="3"/>
<path d="M634.3,375.70000000000005H644.0Q646.4,375.70000000000005 646.4,378.1V386.5Q646.4,388.9 644.0,388.9H634.3Z" fill="url(#gBtn)"/>
<line x1="634.8" y1="375.8" x2="634.8" y2="388.8" stroke="#e4dcc0" stroke-width="1"/>
<rect x="636.8" y="385.29999999999995" width="1.80" height="1.80" fill="#5e4c16"/>
<rect x="640.0" y="385.29999999999995" width="1.80" height="1.80" fill="#5e4c16"/>
<rect x="643.2" y="385.29999999999995" width="1.80" height="1.80" fill="#5e4c16"/>
<text x="572.1" y="386.0" font-size="11" fill="#1e1e1e" textLength="21.0" lengthAdjust="spacingAndGlyphs">1310</text>
<text x="490.0" y="406.4" font-size="11" fill="#463d2c" textLength="69.5" lengthAdjust="spacingAndGlyphs" stroke="#463d2c" stroke-width="0.12">Счет учета (НУ):</text>
<rect x="570.0" y="395.5" width="77.00" height="14.40" fill="#ffffff" stroke="#c9be95" stroke-width="1.2" rx="3"/>
<path d="M634.3,396.1H644.0Q646.4,396.1 646.4,398.5V406.9Q646.4,409.29999999999995 644.0,409.29999999999995H634.3Z" fill="url(#gBtn)"/>
<line x1="634.8" y1="396.2" x2="634.8" y2="409.2" stroke="#e4dcc0" stroke-width="1"/>
<rect x="636.8" y="405.69999999999993" width="1.80" height="1.80" fill="#5e4c16"/>
<rect x="640.0" y="405.69999999999993" width="1.80" height="1.80" fill="#5e4c16"/>
<rect x="643.2" y="405.69999999999993" width="1.80" height="1.80" fill="#5e4c16"/>
<text x="572.1" y="406.4" font-size="11" fill="#1e1e1e" textLength="27.3" lengthAdjust="spacingAndGlyphs">1310Н</text>
<path d="M160.7,442V431Q160.7,426.8 164.9,426.8H280.8Q285,426.8 285,431V442" fill="#ece6cb" stroke="#c9bf98" stroke-width="1"/>
<path d="M365,442V431Q365,426.8 369.2,426.8H447.6Q451.8,426.8 451.8,431V442" fill="#ece6cb" stroke="#c9bf98" stroke-width="1"/>
<rect x="160.7" y="441.5" width="613.90" height="169.90" fill="#fefbf0" stroke="#c9bf98" stroke-width="1"/>
<path d="M291,442V430.5Q291,426.3 295.2,426.3H355.3Q359.5,426.3 359.5,430.5V442" fill="#fefbf0" stroke="#c9bf98" stroke-width="1"/>
<path d="M293.5,427.3H357" stroke="#f3c27a" stroke-width="1.3"/>
<rect x="291.6" y="440.8" width="67.30" height="1.50" fill="#fefbf0"/>
<text x="169.2" y="438.6" font-size="11" fill="#463d2c" textLength="108.6" lengthAdjust="spacingAndGlyphs" stroke="#463d2c" stroke-width="0.12">Комплектующие (3 поз.)</text>
<text x="299.4" y="437.8" font-size="11" fill="#463d2c" textLength="51.4" lengthAdjust="spacingAndGlyphs" stroke="#463d2c" stroke-width="0.12">Счета учета</text>
<text x="373.6" y="438.2" font-size="11" fill="#463d2c" textLength="70.4" lengthAdjust="spacingAndGlyphs" stroke="#463d2c" stroke-width="0.12">Дополнительно</text>
<text x="166.8" y="457.2" font-size="11" font-weight="bold" fill="#9c5e14" textLength="118.2" lengthAdjust="spacingAndGlyphs" stroke="#9c5e14" stroke-width="0.15">Счет учета затрат (БУ)</text>
<line x1="166.8" y1="460.8" x2="484" y2="460.8" stroke="#d9cfa9" stroke-width="1.2"/>
<text x="166.6" y="477.4" font-size="11" fill="#463d2c" textLength="75.8" lengthAdjust="spacingAndGlyphs" stroke="#463d2c" stroke-width="0.12">Счет затрат (БУ):</text>
<rect x="261.9" y="466.9" width="77.00" height="14.20" fill="#ffffff" stroke="#c9be95" stroke-width="1.2" rx="3"/>
<path d="M326.2,467.5H335.9Q338.29999999999995,467.5 338.29999999999995,469.9V478.1Q338.29999999999995,480.5 335.9,480.5H326.2Z" fill="url(#gBtn)"/>
<line x1="326.7" y1="467.59999999999997" x2="326.7" y2="480.40000000000003" stroke="#e4dcc0" stroke-width="1"/>
<rect x="328.7" y="476.9" width="1.80" height="1.80" fill="#5e4c16"/>
<rect x="331.9" y="476.9" width="1.80" height="1.80" fill="#5e4c16"/>
<rect x="335.09999999999997" y="476.9" width="1.80" height="1.80" fill="#5e4c16"/>
<text x="264.0" y="477.7" font-size="11" fill="#1e1e1e" textLength="21.0" lengthAdjust="spacingAndGlyphs">8210</text>
<text x="166.6" y="498.3" font-size="11" fill="#463d2c" textLength="70.2" lengthAdjust="spacingAndGlyphs" stroke="#463d2c" stroke-width="0.12">Подразделения</text>
<rect x="261.9" y="487.5" width="221.70" height="14.40" fill="#ffffff" stroke="#c9be95" stroke-width="1.2" rx="3"/>
<rect x="457.70000000000005" y="488.1" width="13.20" height="13.20" fill="url(#gBtn)"/>
<line x1="458.20000000000005" y1="488.2" x2="458.20000000000005" y2="501.2" stroke="#e4dcc0" stroke-width="1"/>
<rect x="460.2000000000001" y="497.69999999999993" width="1.80" height="1.80" fill="#5e4c16"/>
<rect x="463.4000000000001" y="497.69999999999993" width="1.80" height="1.80" fill="#5e4c16"/>
<rect x="466.6000000000001" y="497.69999999999993" width="1.80" height="1.80" fill="#5e4c16"/>
<path d="M470.90000000000003,488.1H480.6Q483.0,488.1 483.0,490.5V498.9Q483.0,501.29999999999995 480.6,501.29999999999995H470.90000000000003Z" fill="url(#gBtn)"/>
<line x1="471.40000000000003" y1="488.2" x2="471.40000000000003" y2="501.2" stroke="#e4dcc0" stroke-width="1"/>
<path d="M474.2,491.9L480.8,498.1M480.8,491.9L474.2,498.1" stroke="#58460f" stroke-width="1.7"/>
<text x="264.0" y="498.4" font-size="11" fill="#1e1e1e" textLength="67.8" lengthAdjust="spacingAndGlyphs">Кафе &quot;Колесо&quot;</text>
<text x="166.6" y="519.1" font-size="11" fill="#463d2c" textLength="87.0" lengthAdjust="spacingAndGlyphs" stroke="#463d2c" stroke-width="0.12">Номенклатурные ...</text>
<rect x="261.9" y="507.7" width="221.70" height="14.20" fill="#ffffff" stroke="#c9be95" stroke-width="1.2" rx="3"/>
<rect x="457.70000000000005" y="508.3" width="13.20" height="13.00" fill="url(#gBtn)"/>
<line x1="458.20000000000005" y1="508.4" x2="458.20000000000005" y2="521.1999999999999" stroke="#e4dcc0" stroke-width="1"/>
<rect x="460.2000000000001" y="517.6999999999999" width="1.80" height="1.80" fill="#5e4c16"/>
<rect x="463.4000000000001" y="517.6999999999999" width="1.80" height="1.80" fill="#5e4c16"/>
<rect x="466.6000000000001" y="517.6999999999999" width="1.80" height="1.80" fill="#5e4c16"/>
<path d="M470.90000000000003,508.3H480.6Q483.0,508.3 483.0,510.7V518.9Q483.0,521.3 480.6,521.3H470.90000000000003Z" fill="url(#gBtn)"/>
<line x1="471.40000000000003" y1="508.4" x2="471.40000000000003" y2="521.1999999999999" stroke="#e4dcc0" stroke-width="1"/>
<path d="M474.2,511.9999999999999L480.8,518.1999999999999M480.8,511.9999999999999L474.2,518.1999999999999" stroke="#58460f" stroke-width="1.7"/>
<text x="264.0" y="518.5" font-size="11" fill="#1e1e1e" textLength="39.6" lengthAdjust="spacingAndGlyphs">Общепит</text>
<text x="166.6" y="539.8" font-size="11" fill="#463d2c" textLength="62.4" lengthAdjust="spacingAndGlyphs" stroke="#463d2c" stroke-width="0.12">Статьи затрат</text>
<rect x="261.9" y="528.5" width="221.70" height="14.40" fill="#ffffff" stroke="#c9be95" stroke-width="1.2" rx="3"/>
<rect x="457.70000000000005" y="529.1" width="13.20" height="13.20" fill="url(#gBtn)"/>
<line x1="458.20000000000005" y1="529.2" x2="458.20000000000005" y2="542.1999999999999" stroke="#e4dcc0" stroke-width="1"/>
<rect x="460.2000000000001" y="538.6999999999999" width="1.80" height="1.80" fill="#5e4c16"/>
<rect x="463.4000000000001" y="538.6999999999999" width="1.80" height="1.80" fill="#5e4c16"/>
<rect x="466.6000000000001" y="538.6999999999999" width="1.80" height="1.80" fill="#5e4c16"/>
<path d="M470.90000000000003,529.1H480.6Q483.0,529.1 483.0,531.5V539.9Q483.0,542.3 480.6,542.3H470.90000000000003Z" fill="url(#gBtn)"/>
<line x1="471.40000000000003" y1="529.2" x2="471.40000000000003" y2="542.1999999999999" stroke="#e4dcc0" stroke-width="1"/>
<path d="M474.2,532.9L480.8,539.1M480.8,532.9L474.2,539.1" stroke="#58460f" stroke-width="1.7"/>
<text x="264.0" y="539.4" font-size="11" fill="#1e1e1e" textLength="43.0" lengthAdjust="spacingAndGlyphs">Разделка</text>
<text x="166.8" y="558.2" font-size="11" font-weight="bold" fill="#9c5e14" textLength="177.0" lengthAdjust="spacingAndGlyphs" stroke="#9c5e14" stroke-width="0.15">Отражение расхода при разделке</text>
<line x1="166.8" y1="560.8" x2="484" y2="560.8" stroke="#d9cfa9" stroke-width="1.2"/>
<text x="166.6" y="577.9" font-size="11" fill="#463d2c" textLength="65.0" lengthAdjust="spacingAndGlyphs" stroke="#463d2c" stroke-width="0.12">Статья затрат:</text>
<rect x="261.9" y="567.1" width="221.70" height="14.20" fill="#ffffff" stroke="#c9be95" stroke-width="1.2" rx="3"/>
<rect x="457.70000000000005" y="567.7" width="13.20" height="13.00" fill="url(#gBtn)"/>
<line x1="458.20000000000005" y1="567.8000000000001" x2="458.20000000000005" y2="580.5999999999999" stroke="#e4dcc0" stroke-width="1"/>
<rect x="460.2000000000001" y="577.0999999999999" width="1.80" height="1.80" fill="#5e4c16"/>
<rect x="463.4000000000001" y="577.0999999999999" width="1.80" height="1.80" fill="#5e4c16"/>
<rect x="466.6000000000001" y="577.0999999999999" width="1.80" height="1.80" fill="#5e4c16"/>
<path d="M470.90000000000003,567.7H480.6Q483.0,567.7 483.0,570.1V578.3Q483.0,580.6999999999999 480.6,580.6999999999999H470.90000000000003Z" fill="url(#gBtn)"/>
<line x1="471.40000000000003" y1="567.8000000000001" x2="471.40000000000003" y2="580.5999999999999" stroke="#e4dcc0" stroke-width="1"/>
<path d="M474.2,571.4L480.8,577.6M480.8,571.4L474.2,577.6" stroke="#58460f" stroke-width="1.7"/>
<text x="264.0" y="577.9" font-size="11" fill="#1e1e1e" textLength="43.0" lengthAdjust="spacingAndGlyphs">Разделка</text>
<text x="489.1" y="457.6" font-size="11" font-weight="bold" fill="#9c5e14" textLength="120.0" lengthAdjust="spacingAndGlyphs" stroke="#9c5e14" stroke-width="0.15">Счет учета затрат (НУ)</text>
<line x1="489" y1="460.8" x2="768.6" y2="460.8" stroke="#d9cfa9" stroke-width="1.2"/>
<text x="489.0" y="477.4" font-size="11" fill="#463d2c" textLength="76.0" lengthAdjust="spacingAndGlyphs" stroke="#463d2c" stroke-width="0.12">Счет затрат (НУ):</text>
<rect x="570.0" y="466.9" width="77.40" height="14.20" fill="#ffffff" stroke="#c9be95" stroke-width="1.2" rx="3"/>
<rect x="621.5" y="467.5" width="13.20" height="13.00" fill="url(#gBtn)"/>
<line x1="622.0" y1="467.59999999999997" x2="622.0" y2="480.40000000000003" stroke="#e4dcc0" stroke-width="1"/>
<rect x="624.0" y="476.9" width="1.80" height="1.80" fill="#5e4c16"/>
<rect x="627.2" y="476.9" width="1.80" height="1.80" fill="#5e4c16"/>
<rect x="630.4000000000001" y="476.9" width="1.80" height="1.80" fill="#5e4c16"/>
<path d="M634.7,467.5H644.4000000000001Q646.8000000000001,467.5 646.8000000000001,469.9V478.1Q646.8000000000001,480.5 644.4000000000001,480.5H634.7Z" fill="url(#gBtn)"/>
<line x1="635.2" y1="467.59999999999997" x2="635.2" y2="480.40000000000003" stroke="#e4dcc0" stroke-width="1"/>
<path d="M638.0000000000001,471.2L644.6,477.40000000000003M644.6,471.2L638.0000000000001,477.40000000000003" stroke="#58460f" stroke-width="1.7"/>
<text x="572.1" y="477.7" font-size="11" fill="#1e1e1e" textLength="27.8" lengthAdjust="spacingAndGlyphs">8200Н</text>
<text x="489.0" y="498.3" font-size="11" fill="#463d2c" textLength="69.8" lengthAdjust="spacingAndGlyphs" stroke="#463d2c" stroke-width="0.12">Подразделения</text>
<rect x="570.0" y="487.5" width="197.30" height="14.40" fill="#ffffff" stroke="#c9be95" stroke-width="1.2" rx="3"/>
<rect x="741.4" y="488.1" width="13.20" height="13.20" fill="url(#gBtn)"/>
<line x1="741.9" y1="488.2" x2="741.9" y2="501.2" stroke="#e4dcc0" stroke-width="1"/>
<rect x="743.9" y="497.69999999999993" width="1.80" height="1.80" fill="#5e4c16"/>
<rect x="747.1" y="497.69999999999993" width="1.80" height="1.80" fill="#5e4c16"/>
<rect x="750.3000000000001" y="497.69999999999993" width="1.80" height="1.80" fill="#5e4c16"/>
<path d="M754.6,488.1H764.3000000000001Q766.7,488.1 766.7,490.5V498.9Q766.7,501.29999999999995 764.3000000000001,501.29999999999995H754.6Z" fill="url(#gBtn)"/>
<line x1="755.1" y1="488.2" x2="755.1" y2="501.2" stroke="#e4dcc0" stroke-width="1"/>
<path d="M757.9000000000001,491.9L764.5,498.1M764.5,491.9L757.9000000000001,498.1" stroke="#58460f" stroke-width="1.7"/>
<text x="572.1" y="498.4" font-size="11" fill="#1e1e1e" textLength="68.5" lengthAdjust="spacingAndGlyphs">Кафе &quot;Колесо&quot;</text>
<text x="489.0" y="519.1" font-size="11" fill="#463d2c" textLength="72.0" lengthAdjust="spacingAndGlyphs" stroke="#463d2c" stroke-width="0.12">Номенклатурн...</text>
<rect x="570.0" y="507.7" width="197.30" height="14.20" fill="#ffffff" stroke="#c9be95" stroke-width="1.2" rx="3"/>
<rect x="741.4" y="508.3" width="13.20" height="13.00" fill="url(#gBtn)"/>
<line x1="741.9" y1="508.4" x2="741.9" y2="521.1999999999999" stroke="#e4dcc0" stroke-width="1"/>
<rect x="743.9" y="517.6999999999999" width="1.80" height="1.80" fill="#5e4c16"/>
<rect x="747.1" y="517.6999999999999" width="1.80" height="1.80" fill="#5e4c16"/>
<rect x="750.3000000000001" y="517.6999999999999" width="1.80" height="1.80" fill="#5e4c16"/>
<path d="M754.6,508.3H764.3000000000001Q766.7,508.3 766.7,510.7V518.9Q766.7,521.3 764.3000000000001,521.3H754.6Z" fill="url(#gBtn)"/>
<line x1="755.1" y1="508.4" x2="755.1" y2="521.1999999999999" stroke="#e4dcc0" stroke-width="1"/>
<path d="M757.9000000000001,511.9999999999999L764.5,518.1999999999999M764.5,511.9999999999999L757.9000000000001,518.1999999999999" stroke="#58460f" stroke-width="1.7"/>
<text x="572.1" y="518.5" font-size="11" fill="#1e1e1e" textLength="40.6" lengthAdjust="spacingAndGlyphs">Общепит</text>
<text x="489.0" y="539.8" font-size="11" fill="#463d2c" textLength="62.3" lengthAdjust="spacingAndGlyphs" stroke="#463d2c" stroke-width="0.12">Статьи затрат</text>
<rect x="570.0" y="528.5" width="197.30" height="14.40" fill="#ffffff" stroke="#c9be95" stroke-width="1.2" rx="3"/>
<rect x="741.4" y="529.1" width="13.20" height="13.20" fill="url(#gBtn)"/>
<line x1="741.9" y1="529.2" x2="741.9" y2="542.1999999999999" stroke="#e4dcc0" stroke-width="1"/>
<rect x="743.9" y="538.6999999999999" width="1.80" height="1.80" fill="#5e4c16"/>
<rect x="747.1" y="538.6999999999999" width="1.80" height="1.80" fill="#5e4c16"/>
<rect x="750.3000000000001" y="538.6999999999999" width="1.80" height="1.80" fill="#5e4c16"/>
<path d="M754.6,529.1H764.3000000000001Q766.7,529.1 766.7,531.5V539.9Q766.7,542.3 764.3000000000001,542.3H754.6Z" fill="url(#gBtn)"/>
<line x1="755.1" y1="529.2" x2="755.1" y2="542.1999999999999" stroke="#e4dcc0" stroke-width="1"/>
<path d="M757.9000000000001,532.9L764.5,539.1M764.5,532.9L757.9000000000001,539.1" stroke="#58460f" stroke-width="1.7"/>
<text x="572.1" y="539.4" font-size="11" fill="#1e1e1e" textLength="43.0" lengthAdjust="spacingAndGlyphs">Разделка</text>
<text x="489.1" y="558.2" font-size="11" font-weight="bold" fill="#9c5e14" textLength="170.2" lengthAdjust="spacingAndGlyphs" stroke="#9c5e14" stroke-width="0.15">Отражение дохода при разделке</text>
<line x1="489" y1="560.8" x2="768.6" y2="560.8" stroke="#d9cfa9" stroke-width="1.2"/>
<text x="489.0" y="577.9" font-size="11" fill="#463d2c" textLength="52.2" lengthAdjust="spacingAndGlyphs" stroke="#463d2c" stroke-width="0.12">Вид дохода:</text>
<rect x="570.0" y="567.1" width="197.30" height="14.20" fill="#ffffff" stroke="#c9be95" stroke-width="1.2" rx="3"/>
<rect x="741.4" y="567.7" width="13.20" height="13.00" fill="url(#gBtn)"/>
<line x1="741.9" y1="567.8000000000001" x2="741.9" y2="580.5999999999999" stroke="#e4dcc0" stroke-width="1"/>
<rect x="743.9" y="577.0999999999999" width="1.80" height="1.80" fill="#5e4c16"/>
<rect x="747.1" y="577.0999999999999" width="1.80" height="1.80" fill="#5e4c16"/>
<rect x="750.3000000000001" y="577.0999999999999" width="1.80" height="1.80" fill="#5e4c16"/>
<path d="M754.6,567.7H764.3000000000001Q766.7,567.7 766.7,570.1V578.3Q766.7,580.6999999999999 764.3000000000001,580.6999999999999H754.6Z" fill="url(#gBtn)"/>
<line x1="755.1" y1="567.8000000000001" x2="755.1" y2="580.5999999999999" stroke="#e4dcc0" stroke-width="1"/>
<path d="M757.9000000000001,571.4L764.5,577.6M764.5,571.4L757.9000000000001,577.6" stroke="#58460f" stroke-width="1.7"/>
<text x="572.1" y="577.9" font-size="11" fill="#1e1e1e" textLength="60.5" lengthAdjust="spacingAndGlyphs">Прочий доход</text>
<text x="160.5" y="629.9" font-size="11" fill="#463d2c" textLength="63.3" lengthAdjust="spacingAndGlyphs" stroke="#463d2c" stroke-width="0.12">Комментарий:</text>
<rect x="238.0" y="618.9" width="536.10" height="15.40" fill="#ffffff" stroke="#c9be95" stroke-width="1.2" rx="3"/>
<line x1="152.9" y1="642.2" x2="781.9" y2="642.2" stroke="#c8bd92" stroke-width="1.4"/>
<rect x="152.9" y="642.8" width="629.00" height="20.30" fill="#f3f0dd"/>
<text x="160.5" y="656.7" font-size="11" fill="#2a2a9c" textLength="39.2" lengthAdjust="spacingAndGlyphs" stroke="#2a2a9c" stroke-width="0.12">Романов</text>
<text x="484.6" y="657.1" font-size="11" fill="#463d2c" textLength="109.7" lengthAdjust="spacingAndGlyphs" stroke="#463d2c" stroke-width="0.12">Разделка номенклатуры</text>
<line x1="600.5" y1="645" x2="600.5" y2="661" stroke="#d9d1b3" stroke-width="1"/>
<line x1="601.5" y1="645" x2="601.5" y2="661" stroke="#ffffff" stroke-width="1"/>
<text x="606.0" y="657.1" font-size="11" fill="#463d2c" textLength="32.2" lengthAdjust="spacingAndGlyphs" stroke="#463d2c" stroke-width="0.12">Печать</text>
<path d="M641,652.3H645.6L643.3,654.9Z" fill="#333"/>
<line x1="650.0" y1="645" x2="650.0" y2="661" stroke="#d9d1b3" stroke-width="1"/>
<line x1="651.0" y1="645" x2="651.0" y2="661" stroke="#ffffff" stroke-width="1"/>
<text x="657.3" y="657.1" font-size="11" font-weight="bold" fill="#463d2c" textLength="13.7" lengthAdjust="spacingAndGlyphs" stroke="#463d2c" stroke-width="0.15">OK</text>
<line x1="677.5" y1="645" x2="677.5" y2="661" stroke="#d9d1b3" stroke-width="1"/>
<line x1="678.5" y1="645" x2="678.5" y2="661" stroke="#ffffff" stroke-width="1"/>
<text x="684.7" y="657.1" font-size="11" fill="#463d2c" textLength="41.3" lengthAdjust="spacingAndGlyphs" stroke="#463d2c" stroke-width="0.12">Записать</text>
<line x1="731.5" y1="645" x2="731.5" y2="661" stroke="#d9d1b3" stroke-width="1"/>
<line x1="732.5" y1="645" x2="732.5" y2="661" stroke="#ffffff" stroke-width="1"/>
<text x="738.9" y="657.1" font-size="11" fill="#463d2c" textLength="37.7" lengthAdjust="spacingAndGlyphs" stroke="#463d2c" stroke-width="0.12">Закрыть</text>
<g filter="url(#sh)">
<rect x="22.9" y="210.9" width="292.5" height="18.6" fill="none" stroke="#ff0000" stroke-width="4.6"/>
<rect x="487.5" y="287.2" width="290.5" height="42.3" fill="none" stroke="#ff0000" stroke-width="4.6"/>
</g>
<line x1="314" y1="230.5" x2="488" y2="300.3" stroke="#ff0000" stroke-width="5"/></svg>
</body></html>
